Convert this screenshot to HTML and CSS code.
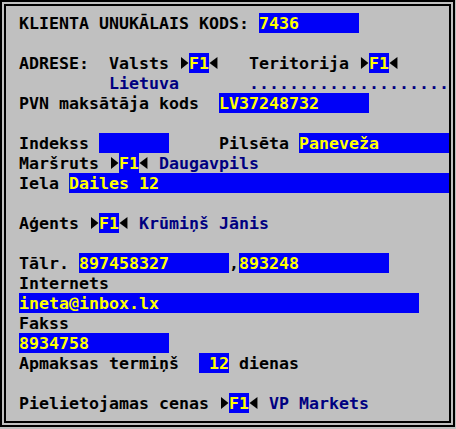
FILE: index.html
```html
<!DOCTYPE html>
<html lang="lv">

<head>
    <meta charset="UTF-8">
    <meta name="viewport" content="width=device-width, initial-scale=1.0">
    <title>Klienta kartiņa</title>
    <link rel="stylesheet" href="styles.css">
</head>

<body>
    <div class="screen">
        <div class="frame">
            <div class="row">KLIENTA UNUKĀLAIS KODS: <span class="fld w10">7436</span></div>
            <div class="row"></div>
            <div class="row">ADRESE:  Valsts <span class="tri-r"></span><span class="key">F1</span><span class="tri-l"></span>   Teritorija <span class="tri-r"></span><span class="key">F1</span><span class="tri-l"></span></div>
            <div class="row">         <span class="val">Lietuva</span>       <span class="val">....................</span></div>
            <div class="row">PVN maksātāja kods  <span class="fld w15">LV37248732</span></div>
            <div class="row"></div>
            <div class="row">Indekss <span class="fld w7"></span>     Pilsēta <span class="fld w15">Paneveža</span></div>
            <div class="row">Maršruts <span class="tri-r"></span><span class="key">F1</span><span class="tri-l"></span> <span class="val">Daugavpils</span></div>
            <div class="row">Iela <span class="fld w38">Dailes 12</span></div>
            <div class="row"></div>
            <div class="row">Aģents <span class="tri-r"></span><span class="key">F1</span><span class="tri-l"></span> <span class="val">Krūmiņš Jānis</span></div>
            <div class="row"></div>
            <div class="row">Tālr. <span class="fld w15">897458327</span>,<span class="fld w15">893248</span></div>
            <div class="row">Internets</div>
            <div class="row"><span class="fld w40">ineta@inbox.lx</span></div>
            <div class="row">Fakss</div>
            <div class="row"><span class="fld w15">8934758</span></div>
            <div class="row">Apmaksas termiņš  <span class="fld w3"> 12</span> dienas</div>
            <div class="row"></div>
            <div class="row">Pielietojamas cenas <span class="tri-r"></span><span class="key">F1</span><span class="tri-l"></span> <span class="val">VP Markets</span></div>
        </div>
    </div>
</body>

</html>
```

FILE: styles.css
```css
body {
    margin: 0;
    background-color: #c0c0c0;
    font-family: "DejaVu Sans Mono", "Liberation Mono", monospace;
    font-size: 16.61px;
    font-weight: bold;
    color: #000;
}

.screen {
    width: 455px;
    height: 427px;
    box-sizing: border-box;
    border: 2px solid #000;
    padding: 2px;
}

.frame {
    height: 100%;
    box-sizing: border-box;
    border: 2px solid #000;
    padding: 7px 0 0 13px;
}

.row {
    height: 20px;
    line-height: 21px;
    white-space: pre;
}

.val {
    color: #000080;
}

.fld,
.key {
    display: inline-block;
    vertical-align: top;
    height: 20px;
    background-color: #0000f8;
    color: #ffff00;
}

.key {
    width: 2ch;
}

.w3 { width: 3ch; }
.w7 { width: 7ch; }
.w10 { width: 10ch; }
.w15 { width: 15ch; }
.w38 { width: 38ch; }
.w40 { width: 40ch; }

.tri-r,
.tri-l {
    display: inline-block;
    vertical-align: top;
    width: 1ch;
    height: 20px;
    background-color: #000;
}

.tri-r {
    clip-path: polygon(20% 20%, 95% 50%, 20% 80%);
}

.tri-l {
    clip-path: polygon(5% 50%, 85% 20%, 85% 80%);
}
```
